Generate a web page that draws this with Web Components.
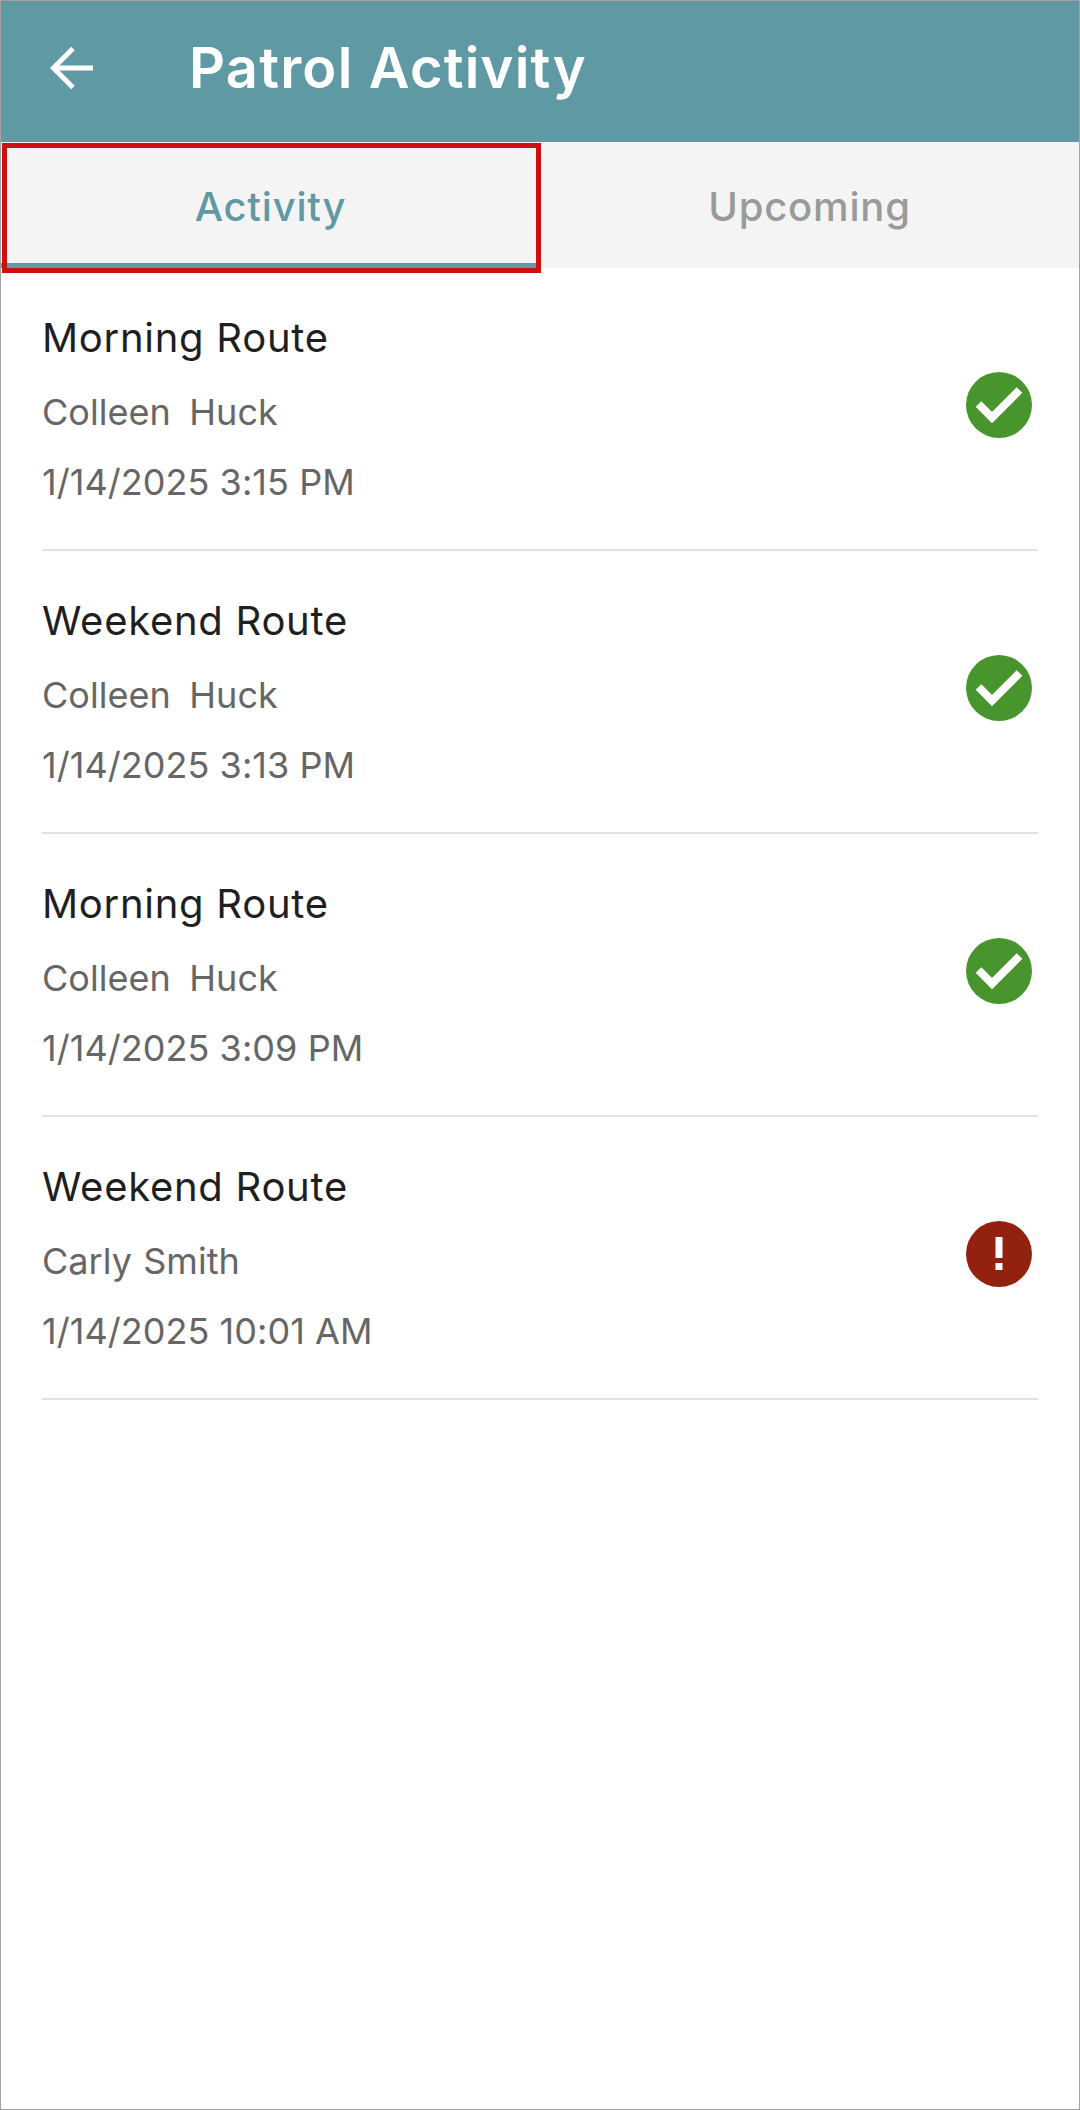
<!DOCTYPE html>
<html><head><meta charset="utf-8">
<style>
html,body{margin:0;padding:0;background:#fff}
body{font-family:"Inter","Liberation Sans",sans-serif}
</style></head><body>
<patrol-screen>
  <app-bar slot="bar" label="Patrol Activity"></app-bar>
  <tab-strip slot="tabs"></tab-strip>
  <activity-row route="Morning Route" who="Colleen&nbsp; Huck" gap="-1" when="1/14/2025 3:15 PM" status="ok"></activity-row>
  <activity-row route="Weekend Route" who="Colleen&nbsp; Huck" gap="-1" when="1/14/2025 3:13 PM" status="ok"></activity-row>
  <activity-row route="Morning Route" who="Colleen&nbsp; Huck" gap="-1" when="1/14/2025 3:09 PM" status="ok"></activity-row>
  <activity-row route="Weekend Route" who="Carly Smith" gap="1" when="1/14/2025 10:01 AM" status="alert"></activity-row>
</patrol-screen>
<script>
customElements.define('patrol-screen',class extends HTMLElement{constructor(){super();this.attachShadow({mode:'open'}).innerHTML=`<style>
:host{display:flex;flex-direction:column;box-sizing:border-box;width:1080px;height:2110px;border:1px solid #a3a3a3;background:#fff;overflow:hidden}
.list{display:flex;flex-direction:column}
</style><slot name="bar"></slot><slot name="tabs"></slot><div class="list"><slot></slot></div>`}});
customElements.define('app-bar',class extends HTMLElement{constructor(){super();this.attachShadow({mode:'open'}).innerHTML=`<style>
:host{display:flex;align-items:center;height:141px;background:#5f99a3;color:#fff;padding-left:49px;box-sizing:border-box}
svg{display:block;flex:none;margin-top:-7px}
h1{margin:-7px 0 0 95px;font:600 56px/64px "Inter",sans-serif;letter-spacing:1.2px}
</style><svg width="44" height="44" viewBox="0 0 44 44" fill="none" stroke="#fff" stroke-width="5"><path d="M43 22H4"/><path d="M23 2.500 3.500 22 23 41.500"/></svg><h1>${this.getAttribute('label')}</h1>`}});
customElements.define('tab-strip',class extends HTMLElement{constructor(){super();this.attachShadow({mode:'open'}).innerHTML=`<style>
:host{display:flex;height:126px;background:#f4f4f4;position:relative}
.t{flex:1;display:flex;align-items:center;justify-content:center;font:500 40px/46px "Inter",sans-serif;letter-spacing:.8px;color:#9a9a9a;box-sizing:border-box;padding-top:4px}
.a{color:#5f99a3;border-bottom:5px solid #5f99a3;padding-top:9px}
.mark{position:absolute;left:1px;top:1px;width:539px;height:130px;box-sizing:border-box;border:5px solid #cc1111}
</style><div class="t a">Activity</div><div class="t">Upcoming</div><div class="mark"></div>`}});
customElements.define('activity-row',class extends HTMLElement{constructor(){super();
const ok=this.getAttribute('status')==='ok';
const icon=ok?`<svg width="66" height="66" viewBox="0 0 66 66"><circle cx="33" cy="33" r="33" fill="#47952c"/><path d="M12.500 32 26 45.500 53.500 18" fill="none" stroke="#fff" stroke-width="8"/></svg>`
:`<svg width="66" height="66" viewBox="0 0 66 66"><circle cx="33" cy="33" r="33" fill="#93210f"/><rect x="29.500" y="16" width="7" height="21" fill="#fff"/><rect x="29.500" y="42" width="7" height="7" fill="#fff"/></svg>`;
this.attachShadow({mode:'open'}).innerHTML=`<style>
:host{display:block;padding:0 41px}
.r{display:flex;align-items:center;height:281px;border-bottom:2px solid #e2e2e2;box-sizing:content-box}
.c{flex:1;display:flex;flex-direction:column}
.n{font:400 40px/48px "Inter",sans-serif;letter-spacing:.72px;color:#1f1f1f;margin-bottom:28px}
.s{font:400 36px/44px "Inter",sans-serif;letter-spacing:.05px;color:#666;margin-bottom:26px}
.w{word-spacing:${this.getAttribute('gap')}px}
.s:last-child{margin-bottom:0}
svg{display:block;flex:none;margin-right:6px;margin-top:-8px}
</style><div class="r"><div class="c"><div class="n">${this.getAttribute('route')}</div><div class="s w">${this.getAttribute('who')}</div><div class="s">${this.getAttribute('when')}</div></div>${icon}</div>`}});
</script>
</body></html>
